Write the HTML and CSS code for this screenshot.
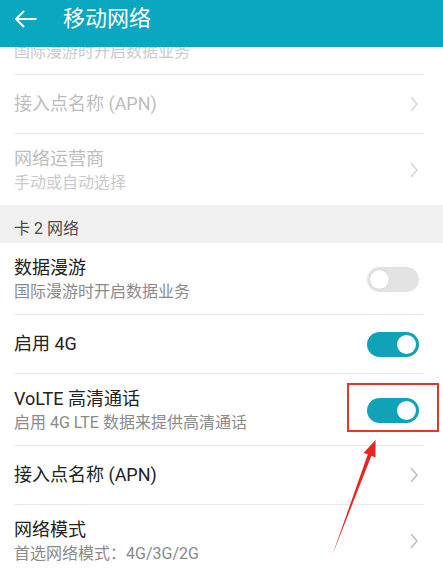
FILE: index.html
```html
<!DOCTYPE html>
<html lang="zh-CN">
<head>
    <meta charset="UTF-8">
    <meta name="viewport" content="width=device-width, initial-scale=1.0">
    <title>移动网络</title>
    <link rel="stylesheet" href="styles.css">
</head>
<body>
    <div class="app">
        <header class="top_bar">
            <a href="javascript:void(0)" class="back">
                <svg width="24" height="24" viewBox="0 0 24 24"><path d="M22.5 12H2M10 4L2 12l8 8" fill="none" stroke="#fff" stroke-width="2"/></svg>
            </a>
            <h1>移动网络</h1>
        </header>

        <div class="list_wrap">
            <ul class="set_list">
                <!-- scrolled: only the second line is still visible -->
                <li class="item two dis first">
                    <div class="item_txt">
                        <p class="sub">国际漫游时开启数据业务</p>
                    </div>
                </li>
                <li class="item one dis">
                    <div class="item_txt">
                        <p class="ttl">接入点名称 (APN)</p>
                    </div>
                    <svg class="arr" width="8" height="16" viewBox="0 0 8 16"><path d="M1 1l6 7-6 7" fill="none" stroke-width="1.6"/></svg>
                </li>
                <li class="item two dis end">
                    <div class="item_txt">
                        <p class="ttl">网络运营商</p>
                        <p class="sub">手动或自动选择</p>
                    </div>
                    <svg class="arr" width="8" height="16" viewBox="0 0 8 16"><path d="M1 1l6 7-6 7" fill="none" stroke-width="1.6"/></svg>
                </li>
            </ul>

            <div class="group_tit">卡 2 网络</div>

            <ul class="set_list">
                <li class="item two">
                    <div class="item_txt">
                        <p class="ttl">数据漫游</p>
                        <p class="sub">国际漫游时开启数据业务</p>
                    </div>
                    <span class="switch"></span>
                </li>
                <li class="item one">
                    <div class="item_txt">
                        <p class="ttl">启用 4G</p>
                    </div>
                    <span class="switch on"></span>
                </li>
                <li class="item two">
                    <div class="item_txt">
                        <p class="ttl">VoLTE 高清通话</p>
                        <p class="sub">启用 4G LTE 数据来提供高清通话</p>
                    </div>
                    <span class="switch on"></span>
                </li>
                <li class="item one">
                    <div class="item_txt">
                        <p class="ttl">接入点名称 (APN)</p>
                    </div>
                    <svg class="arr" width="8" height="16" viewBox="0 0 8 16"><path d="M1 1l6 7-6 7" fill="none" stroke-width="1.6"/></svg>
                </li>
                <li class="item two">
                    <div class="item_txt">
                        <p class="ttl">网络模式</p>
                        <p class="sub">首选网络模式：4G/3G/2G</p>
                    </div>
                    <svg class="arr" width="8" height="16" viewBox="0 0 8 16"><path d="M1 1l6 7-6 7" fill="none" stroke-width="1.6"/></svg>
                </li>
            </ul>
        </div>

        <!-- annotation -->
        <div class="mark"></div>
        <svg class="mark_arrow" width="443" height="572" viewBox="0 0 443 572">
            <polygon points="375.5,440 363.5,453 367.8,454.3 332,556 371.4,455.7 375.5,457.5" fill="#e8261f"/>
        </svg>
    </div>
</body>
</html>
```

FILE: styles.css
```css
* {
    margin: 0;
    padding: 0;
    box-sizing: content-box;
}

body {
    background-color: #fff;
    font-family: Roboto, "Noto Sans CJK SC", sans-serif;
}

ul {
    list-style: none;
}

.app {
    position: relative;
    width: 443px;
    height: 572px;
    overflow: hidden;
    background-color: #fff;
}

/* top bar */
.top_bar {
    display: flex;
    align-items: center;
    height: 38px;
    padding: 0 0 9px 14px;
    background-color: #0ba6bf;
}

.top_bar .back {
    display: block;
    width: 24px;
    height: 24px;
}

.top_bar .back svg {
    display: block;
}

.top_bar h1 {
    margin-left: 25px;
    color: #fff;
    font-size: 22px;
    font-weight: normal;
    line-height: 1;
}

/* list */
.list_wrap {
    height: 525px;
    overflow: hidden;
}

.item {
    display: flex;
    align-items: center;
    margin: 0 19px 0 14px;
    border-bottom: 1px solid #e8e8e8;
}

.item.end {
    border-bottom: none;
}

.item.one {
    height: 58px;
}

.item.two {
    padding: 12px 0 11px;
}

.item.two.first {
    margin-top: -44px;
    padding-top: 38px;
}

.item_txt {
    flex: 1;
}

.item .ttl {
    color: #222;
    font-size: 18px;
    line-height: 26px;
}

.item .sub {
    color: #8a8a8a;
    font-size: 16px;
    line-height: 22px;
}

.item .arr {
    display: block;
    margin-right: 6px;
    stroke: #bfbfbf;
}

.item.dis .ttl {
    color: #bdbdbd;
}

.item.dis .sub {
    color: #cacaca;
}

.item.dis .arr {
    stroke: #d6d6d6;
}

.group_tit {
    height: 22px;
    padding: 13px 14px 3px;
    background-color: #f0f0f0;
    color: #4a4a4a;
    font-size: 16px;
    line-height: 22px;
}

/* switch */
.switch {
    position: relative;
    display: block;
    width: 52px;
    height: 25px;
    margin-right: 5px;
    border-radius: 13px;
    background-color: #e3e3e3;
}

.switch::after {
    content: "";
    position: absolute;
    left: 3px;
    top: 3px;
    width: 19px;
    height: 19px;
    border-radius: 50%;
    background-color: #fff;
    box-shadow: 0 0 1px rgba(0, 0, 0, 0.25);
}

.switch.on {
    background-color: #10a3b8;
}

.switch.on::after {
    left: auto;
    right: 3px;
    box-shadow: none;
}

/* annotation */
.mark {
    position: absolute;
    left: 347px;
    top: 383px;
    width: 88px;
    height: 45px;
    border: 2px solid #e5352d;
}

.mark_arrow {
    position: absolute;
    left: 0;
    top: 0;
    pointer-events: none;
}
```
